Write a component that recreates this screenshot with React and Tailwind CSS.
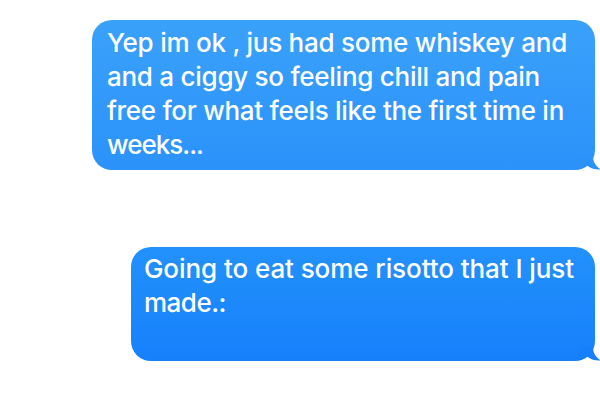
import React, { useLayoutEffect, useRef, useState } from "react";

function FitLine({ text, target }) {
  const ref = useRef(null);
  const [ls, setLs] = useState(0);
  useLayoutEffect(() => {
    const el = ref.current;
    if (!el || !text) return;
    el.style.letterSpacing = "0px";
    const w = el.getBoundingClientRect().width;
    const n = text.length;
    setLs((target - w) / n);
  }, [text, target]);
  return (
    <div className="h-[34px] leading-[34px] whitespace-nowrap">
      <span ref={ref} className="inline-block" style={{ letterSpacing: ls + "px" }}>
        {text}
      </span>
    </div>
  );
}

function Tail({ color }) {
  return (
    <svg
      className="absolute"
      style={{ right: -6, bottom: 0 }}
      width="22"
      height="14"
      viewBox="0 0 22 14"
    >
      <path
        d="M0 0 L14 0 C14 5 16 10 22 13.5 C16 14 11 12 8 9.5 C5 11 3 13 0 13 Z"
        fill={color}
      />
    </svg>
  );
}

function Bubble({ lines, className, tailColor }) {
  return (
    <div className={"relative rounded-[20px] text-white " + className}>
      {lines.map(([t, w], i) => (
        <FitLine key={i} text={t} target={w} />
      ))}
      <Tail color={tailColor} />
    </div>
  );
}

export default function App() {
  return (
    <div
      className="w-[600px] h-[400px] bg-white overflow-hidden relative"
      style={{ fontFamily: "Inter, 'Liberation Sans', sans-serif" }}
    >
      <div className="flex flex-col items-end pr-[5px] pt-[20px] text-[26px] font-medium">
        <Bubble
          className="w-[503px] pl-[15px] pt-[6px] pb-[8px] bg-gradient-to-b from-[#3aa1fa] to-[#2b92fa]"
          tailColor="#2b92fa"
          lines={[
            ["Yep im ok , jus had some whiskey and", 460],
            ["and a ciggy so feeling chill and pain", 433],
            ["free for what feels like the first time in", 457],
            ["weeks...", 96],
          ]}
        />
        <div className="h-[77px]" />
        <Bubble
          className="w-[464px] pl-[13px] pt-[5px] pb-[7px] bg-gradient-to-b from-[#2391fb] to-[#1680fb]"
          tailColor="#1680fb"
          lines={[
            ["Going to eat some risotto that I just", 430],
            ["made.:", 82],
            ["", 0],
          ]}
        />
      </div>
    </div>
  );
}
